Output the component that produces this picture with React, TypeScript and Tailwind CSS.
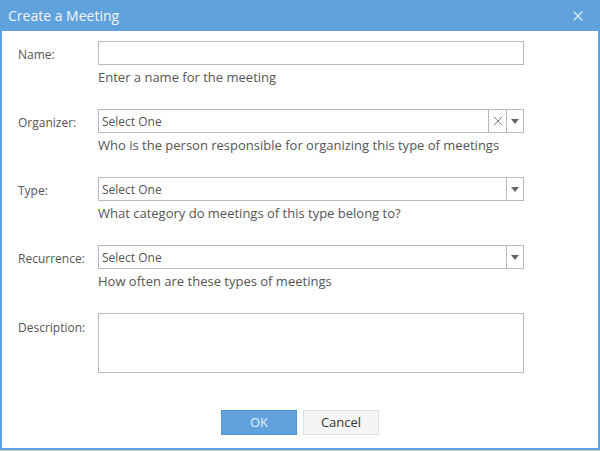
import { X } from 'lucide-react';

const font = { fontFamily: '"Open Sans", "Noto Sans", sans-serif' };

function Caret() {
  return (
    <svg width="8" height="5" viewBox="0 0 8 5" className="block">
      <path d="M0 0h8L4 5z" fill="#666" />
    </svg>
  );
}

function Field({ label, help, select, clear }: { label: string; help?: string; select?: boolean; clear?: boolean }) {
  return (
    <div className="flex">
      <div className="w-[96px] shrink-0 pl-[16px] h-[24px] pt-[4px] flex items-center text-[12px] text-[#555]">{label}</div>
      <div className="w-[426px]">
        <div className="h-[24px] border border-[#b7b7c8] bg-white flex items-stretch">
          <div className="flex-1 flex items-center pl-[3px] pt-[1px] text-[12px] text-[#555]">{select ? 'Select One' : ''}</div>
          {clear && (
            <div className="w-[18px] border-l border-[#b7b7c8] flex items-center justify-center">
              <X size={16} strokeWidth={1.25} color="#666" />
            </div>
          )}
          {select && (
            <div className="w-[17px] border-l border-[#b7b7c8] flex items-center justify-center">
              <Caret />
            </div>
          )}
        </div>
        {help && <div className="mt-[3px] leading-[18px] text-[13px] text-[#555]">{help}</div>}
      </div>
    </div>
  );
}

export default function App() {
  return (
    <div style={font} className="w-[600px] h-[451px] bg-[#c8c8c8]">
      <div className="w-[600px] h-[450px] bg-[#5fa2dd] pl-[2px] pr-[2px] pb-[2px] flex flex-col">
        {/* Header */}
        <div className="h-[31px] -ml-[2px] -mr-[2px] pl-[8px] pr-[14px] flex items-center justify-between">
          <span className="text-[14px] text-[#f2f6fb]">Create a Meeting</span>
          <X size={16} strokeWidth={2} color="#d6e8f8" />
        </div>

        {/* Body */}
        <div className="flex-1 bg-white pt-[10px] flex flex-col">
          <div className="flex flex-col gap-[23px]">
            <Field label="Name:" help="Enter a name for the meeting" />
            <Field label="Organizer:" help="Who is the person responsible for organizing this type of meetings" select clear />
            <Field label="Type:" help="What category do meetings of this type belong to?" select />
            <Field label="Recurrence:" help="How often are these types of meetings" select />
            <div className="flex">
              <div className="w-[96px] shrink-0 pl-[16px] pt-[6px] text-[12px] text-[#555]">Description:</div>
              <div className="w-[426px] h-[60px] border border-[#b7b7c8]" />
            </div>
          </div>

          <div className="mt-[37px] flex justify-center gap-[6px]">
            <button className="w-[76px] h-[25px] bg-[#5fa2dd] border border-[#5593cc] text-[13px] text-[#e6f0fa]">OK</button>
            <button className="w-[76px] h-[25px] bg-[#f5f5f5] border border-[#e0e0e0] text-[13px] text-[#333]">Cancel</button>
          </div>
        </div>
      </div>
    </div>
  );
}
